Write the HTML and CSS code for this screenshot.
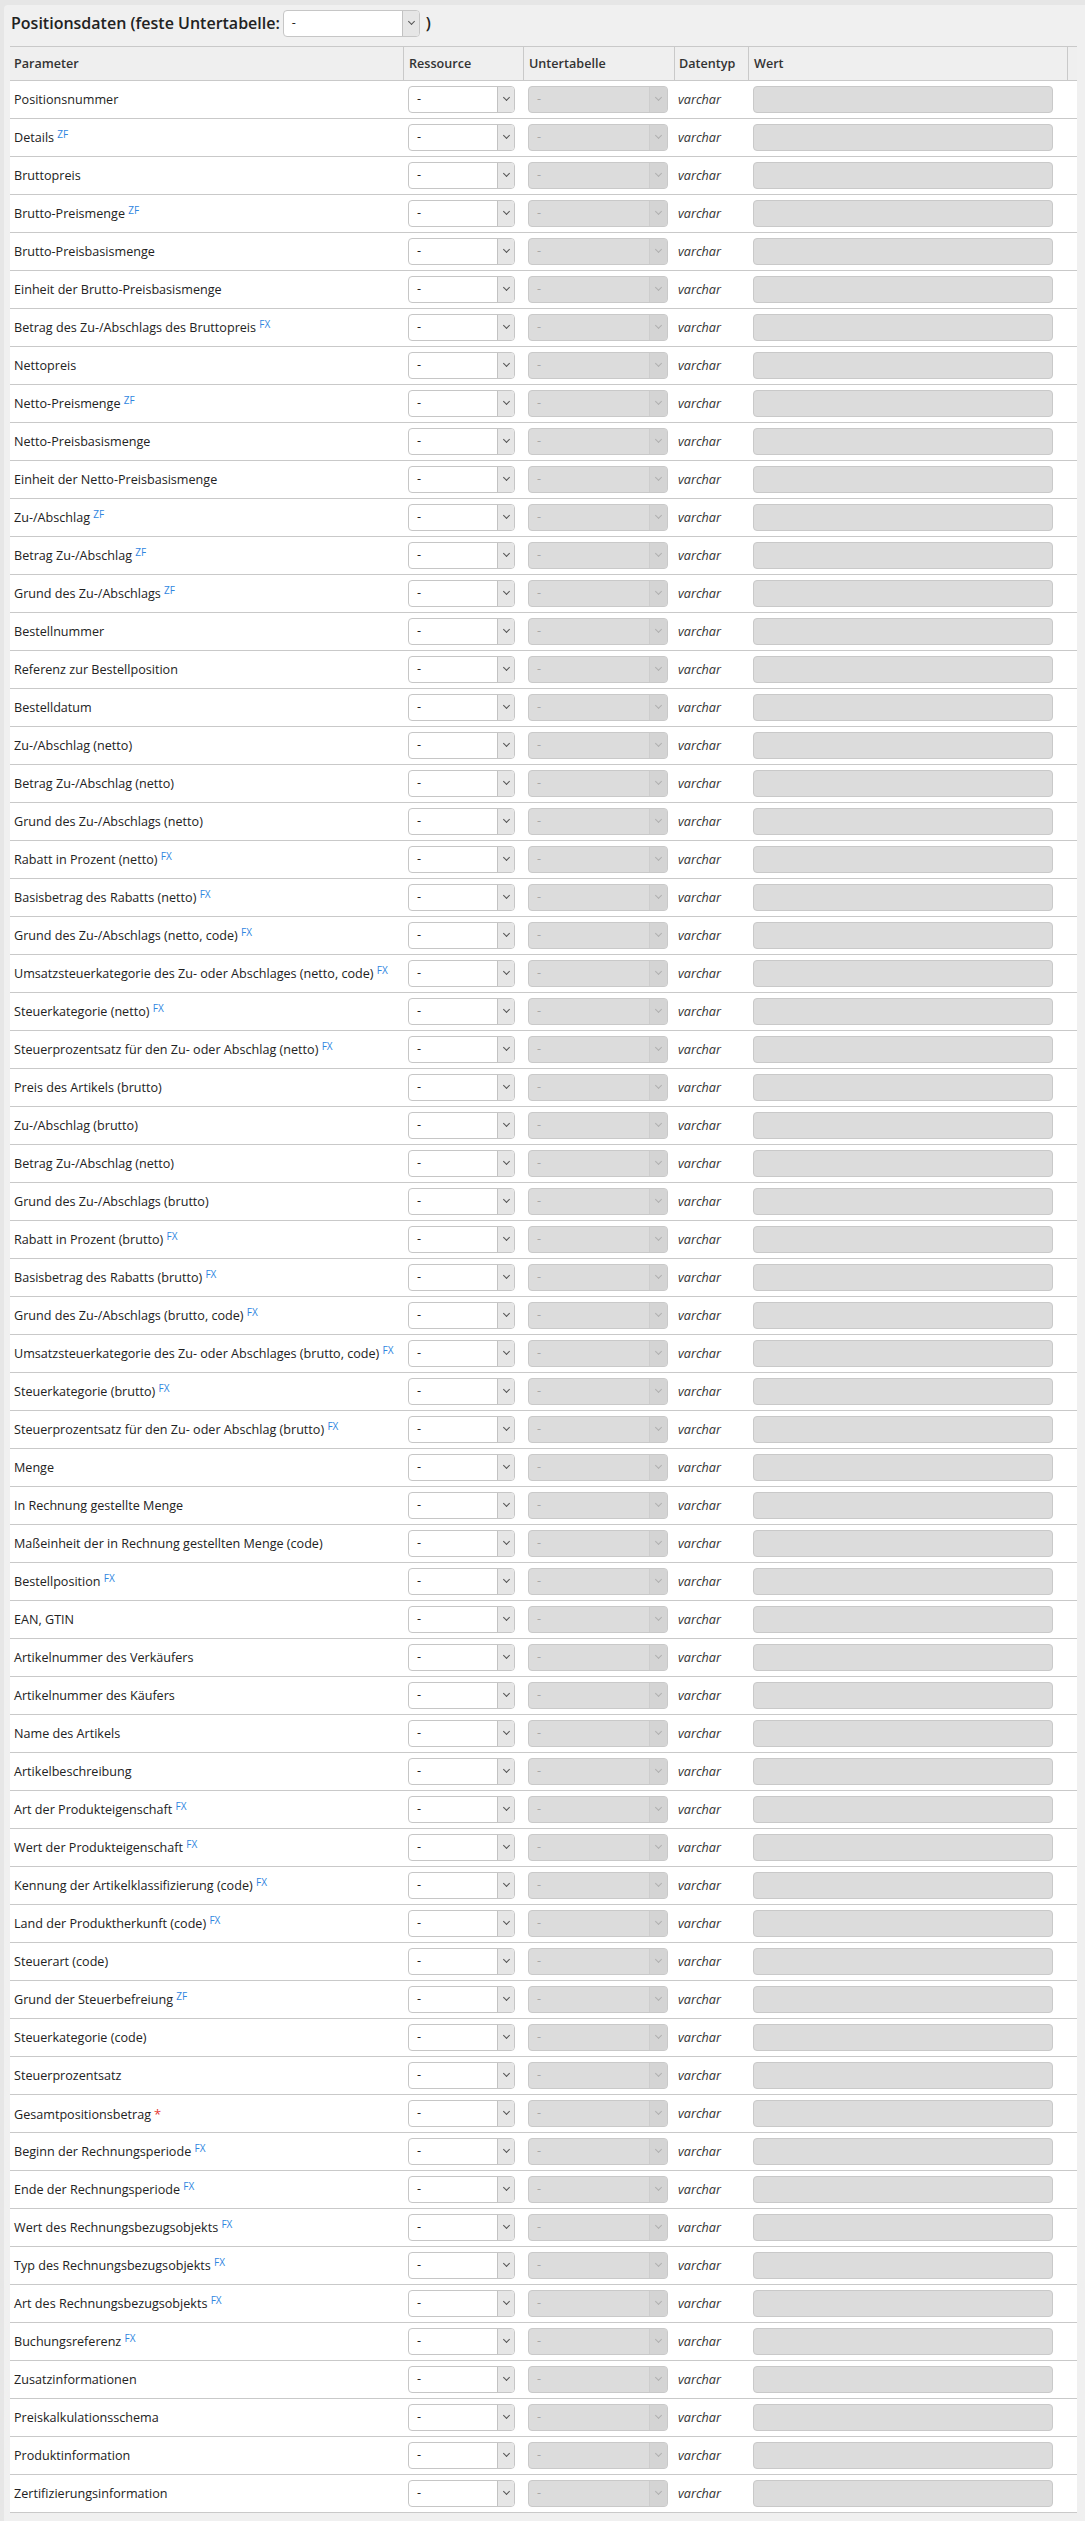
FILE: index.html
```html
<!DOCTYPE html>
<html lang="de">
<head>
<meta charset="utf-8">
<title>Positionsdaten</title>
<link rel="stylesheet" href="styles.css">
</head>
<body>
<div class="panel">
  <h2 class="title"><span>Positionsdaten (feste Untertabelle:</span><div class="sel title-sel"><span>-</span></div><span class="paren">)</span></h2>
  <table class="grid">
    <thead>
      <tr><th class="c1">Parameter</th><th class="c2">Ressource</th><th class="c3">Untertabelle</th><th class="c4">Datentyp</th><th class="c5">Wert</th><th class="c6"></th></tr>
    </thead>
    <tbody>
      <tr><td>Positionsnummer</td><td><div class="sel"><span>-</span></div></td><td><div class="sel dis"><span>-</span></div></td><td class="dt">varchar</td><td><div class="inp"></div></td><td></td></tr>
      <tr><td>Details <sup class="tag">ZF</sup></td><td><div class="sel"><span>-</span></div></td><td><div class="sel dis"><span>-</span></div></td><td class="dt">varchar</td><td><div class="inp"></div></td><td></td></tr>
      <tr><td>Bruttopreis</td><td><div class="sel"><span>-</span></div></td><td><div class="sel dis"><span>-</span></div></td><td class="dt">varchar</td><td><div class="inp"></div></td><td></td></tr>
      <tr><td>Brutto-Preismenge <sup class="tag">ZF</sup></td><td><div class="sel"><span>-</span></div></td><td><div class="sel dis"><span>-</span></div></td><td class="dt">varchar</td><td><div class="inp"></div></td><td></td></tr>
      <tr><td>Brutto-Preisbasismenge</td><td><div class="sel"><span>-</span></div></td><td><div class="sel dis"><span>-</span></div></td><td class="dt">varchar</td><td><div class="inp"></div></td><td></td></tr>
      <tr><td>Einheit der Brutto-Preisbasismenge</td><td><div class="sel"><span>-</span></div></td><td><div class="sel dis"><span>-</span></div></td><td class="dt">varchar</td><td><div class="inp"></div></td><td></td></tr>
      <tr><td>Betrag des Zu-/Abschlags des Bruttopreis <sup class="tag">FX</sup></td><td><div class="sel"><span>-</span></div></td><td><div class="sel dis"><span>-</span></div></td><td class="dt">varchar</td><td><div class="inp"></div></td><td></td></tr>
      <tr><td>Nettopreis</td><td><div class="sel"><span>-</span></div></td><td><div class="sel dis"><span>-</span></div></td><td class="dt">varchar</td><td><div class="inp"></div></td><td></td></tr>
      <tr><td>Netto-Preismenge <sup class="tag">ZF</sup></td><td><div class="sel"><span>-</span></div></td><td><div class="sel dis"><span>-</span></div></td><td class="dt">varchar</td><td><div class="inp"></div></td><td></td></tr>
      <tr><td>Netto-Preisbasismenge</td><td><div class="sel"><span>-</span></div></td><td><div class="sel dis"><span>-</span></div></td><td class="dt">varchar</td><td><div class="inp"></div></td><td></td></tr>
      <tr><td>Einheit der Netto-Preisbasismenge</td><td><div class="sel"><span>-</span></div></td><td><div class="sel dis"><span>-</span></div></td><td class="dt">varchar</td><td><div class="inp"></div></td><td></td></tr>
      <tr><td>Zu-/Abschlag <sup class="tag">ZF</sup></td><td><div class="sel"><span>-</span></div></td><td><div class="sel dis"><span>-</span></div></td><td class="dt">varchar</td><td><div class="inp"></div></td><td></td></tr>
      <tr><td>Betrag Zu-/Abschlag <sup class="tag">ZF</sup></td><td><div class="sel"><span>-</span></div></td><td><div class="sel dis"><span>-</span></div></td><td class="dt">varchar</td><td><div class="inp"></div></td><td></td></tr>
      <tr><td>Grund des Zu-/Abschlags <sup class="tag">ZF</sup></td><td><div class="sel"><span>-</span></div></td><td><div class="sel dis"><span>-</span></div></td><td class="dt">varchar</td><td><div class="inp"></div></td><td></td></tr>
      <tr><td>Bestellnummer</td><td><div class="sel"><span>-</span></div></td><td><div class="sel dis"><span>-</span></div></td><td class="dt">varchar</td><td><div class="inp"></div></td><td></td></tr>
      <tr><td>Referenz zur Bestellposition</td><td><div class="sel"><span>-</span></div></td><td><div class="sel dis"><span>-</span></div></td><td class="dt">varchar</td><td><div class="inp"></div></td><td></td></tr>
      <tr><td>Bestelldatum</td><td><div class="sel"><span>-</span></div></td><td><div class="sel dis"><span>-</span></div></td><td class="dt">varchar</td><td><div class="inp"></div></td><td></td></tr>
      <tr><td>Zu-/Abschlag (netto)</td><td><div class="sel"><span>-</span></div></td><td><div class="sel dis"><span>-</span></div></td><td class="dt">varchar</td><td><div class="inp"></div></td><td></td></tr>
      <tr><td>Betrag Zu-/Abschlag (netto)</td><td><div class="sel"><span>-</span></div></td><td><div class="sel dis"><span>-</span></div></td><td class="dt">varchar</td><td><div class="inp"></div></td><td></td></tr>
      <tr><td>Grund des Zu-/Abschlags (netto)</td><td><div class="sel"><span>-</span></div></td><td><div class="sel dis"><span>-</span></div></td><td class="dt">varchar</td><td><div class="inp"></div></td><td></td></tr>
      <tr><td>Rabatt in Prozent (netto) <sup class="tag">FX</sup></td><td><div class="sel"><span>-</span></div></td><td><div class="sel dis"><span>-</span></div></td><td class="dt">varchar</td><td><div class="inp"></div></td><td></td></tr>
      <tr><td>Basisbetrag des Rabatts (netto) <sup class="tag">FX</sup></td><td><div class="sel"><span>-</span></div></td><td><div class="sel dis"><span>-</span></div></td><td class="dt">varchar</td><td><div class="inp"></div></td><td></td></tr>
      <tr><td>Grund des Zu-/Abschlags (netto, code) <sup class="tag">FX</sup></td><td><div class="sel"><span>-</span></div></td><td><div class="sel dis"><span>-</span></div></td><td class="dt">varchar</td><td><div class="inp"></div></td><td></td></tr>
      <tr><td>Umsatzsteuerkategorie des Zu- oder Abschlages (netto, code) <sup class="tag">FX</sup></td><td><div class="sel"><span>-</span></div></td><td><div class="sel dis"><span>-</span></div></td><td class="dt">varchar</td><td><div class="inp"></div></td><td></td></tr>
      <tr><td>Steuerkategorie (netto) <sup class="tag">FX</sup></td><td><div class="sel"><span>-</span></div></td><td><div class="sel dis"><span>-</span></div></td><td class="dt">varchar</td><td><div class="inp"></div></td><td></td></tr>
      <tr><td>Steuerprozentsatz für den Zu- oder Abschlag (netto) <sup class="tag">FX</sup></td><td><div class="sel"><span>-</span></div></td><td><div class="sel dis"><span>-</span></div></td><td class="dt">varchar</td><td><div class="inp"></div></td><td></td></tr>
      <tr><td>Preis des Artikels (brutto)</td><td><div class="sel"><span>-</span></div></td><td><div class="sel dis"><span>-</span></div></td><td class="dt">varchar</td><td><div class="inp"></div></td><td></td></tr>
      <tr><td>Zu-/Abschlag (brutto)</td><td><div class="sel"><span>-</span></div></td><td><div class="sel dis"><span>-</span></div></td><td class="dt">varchar</td><td><div class="inp"></div></td><td></td></tr>
      <tr><td>Betrag Zu-/Abschlag (netto)</td><td><div class="sel"><span>-</span></div></td><td><div class="sel dis"><span>-</span></div></td><td class="dt">varchar</td><td><div class="inp"></div></td><td></td></tr>
      <tr><td>Grund des Zu-/Abschlags (brutto)</td><td><div class="sel"><span>-</span></div></td><td><div class="sel dis"><span>-</span></div></td><td class="dt">varchar</td><td><div class="inp"></div></td><td></td></tr>
      <tr><td>Rabatt in Prozent (brutto) <sup class="tag">FX</sup></td><td><div class="sel"><span>-</span></div></td><td><div class="sel dis"><span>-</span></div></td><td class="dt">varchar</td><td><div class="inp"></div></td><td></td></tr>
      <tr><td>Basisbetrag des Rabatts (brutto) <sup class="tag">FX</sup></td><td><div class="sel"><span>-</span></div></td><td><div class="sel dis"><span>-</span></div></td><td class="dt">varchar</td><td><div class="inp"></div></td><td></td></tr>
      <tr><td>Grund des Zu-/Abschlags (brutto, code) <sup class="tag">FX</sup></td><td><div class="sel"><span>-</span></div></td><td><div class="sel dis"><span>-</span></div></td><td class="dt">varchar</td><td><div class="inp"></div></td><td></td></tr>
      <tr><td>Umsatzsteuerkategorie des Zu- oder Abschlages (brutto, code) <sup class="tag">FX</sup></td><td><div class="sel"><span>-</span></div></td><td><div class="sel dis"><span>-</span></div></td><td class="dt">varchar</td><td><div class="inp"></div></td><td></td></tr>
      <tr><td>Steuerkategorie (brutto) <sup class="tag">FX</sup></td><td><div class="sel"><span>-</span></div></td><td><div class="sel dis"><span>-</span></div></td><td class="dt">varchar</td><td><div class="inp"></div></td><td></td></tr>
      <tr><td>Steuerprozentsatz für den Zu- oder Abschlag (brutto) <sup class="tag">FX</sup></td><td><div class="sel"><span>-</span></div></td><td><div class="sel dis"><span>-</span></div></td><td class="dt">varchar</td><td><div class="inp"></div></td><td></td></tr>
      <tr><td>Menge</td><td><div class="sel"><span>-</span></div></td><td><div class="sel dis"><span>-</span></div></td><td class="dt">varchar</td><td><div class="inp"></div></td><td></td></tr>
      <tr><td>In Rechnung gestellte Menge</td><td><div class="sel"><span>-</span></div></td><td><div class="sel dis"><span>-</span></div></td><td class="dt">varchar</td><td><div class="inp"></div></td><td></td></tr>
      <tr><td>Maßeinheit der in Rechnung gestellten Menge (code)</td><td><div class="sel"><span>-</span></div></td><td><div class="sel dis"><span>-</span></div></td><td class="dt">varchar</td><td><div class="inp"></div></td><td></td></tr>
      <tr><td>Bestellposition <sup class="tag">FX</sup></td><td><div class="sel"><span>-</span></div></td><td><div class="sel dis"><span>-</span></div></td><td class="dt">varchar</td><td><div class="inp"></div></td><td></td></tr>
      <tr><td>EAN, GTIN</td><td><div class="sel"><span>-</span></div></td><td><div class="sel dis"><span>-</span></div></td><td class="dt">varchar</td><td><div class="inp"></div></td><td></td></tr>
      <tr><td>Artikelnummer des Verkäufers</td><td><div class="sel"><span>-</span></div></td><td><div class="sel dis"><span>-</span></div></td><td class="dt">varchar</td><td><div class="inp"></div></td><td></td></tr>
      <tr><td>Artikelnummer des Käufers</td><td><div class="sel"><span>-</span></div></td><td><div class="sel dis"><span>-</span></div></td><td class="dt">varchar</td><td><div class="inp"></div></td><td></td></tr>
      <tr><td>Name des Artikels</td><td><div class="sel"><span>-</span></div></td><td><div class="sel dis"><span>-</span></div></td><td class="dt">varchar</td><td><div class="inp"></div></td><td></td></tr>
      <tr><td>Artikelbeschreibung</td><td><div class="sel"><span>-</span></div></td><td><div class="sel dis"><span>-</span></div></td><td class="dt">varchar</td><td><div class="inp"></div></td><td></td></tr>
      <tr><td>Art der Produkteigenschaft <sup class="tag">FX</sup></td><td><div class="sel"><span>-</span></div></td><td><div class="sel dis"><span>-</span></div></td><td class="dt">varchar</td><td><div class="inp"></div></td><td></td></tr>
      <tr><td>Wert der Produkteigenschaft <sup class="tag">FX</sup></td><td><div class="sel"><span>-</span></div></td><td><div class="sel dis"><span>-</span></div></td><td class="dt">varchar</td><td><div class="inp"></div></td><td></td></tr>
      <tr><td>Kennung der Artikelklassifizierung (code) <sup class="tag">FX</sup></td><td><div class="sel"><span>-</span></div></td><td><div class="sel dis"><span>-</span></div></td><td class="dt">varchar</td><td><div class="inp"></div></td><td></td></tr>
      <tr><td>Land der Produktherkunft (code) <sup class="tag">FX</sup></td><td><div class="sel"><span>-</span></div></td><td><div class="sel dis"><span>-</span></div></td><td class="dt">varchar</td><td><div class="inp"></div></td><td></td></tr>
      <tr><td>Steuerart (code)</td><td><div class="sel"><span>-</span></div></td><td><div class="sel dis"><span>-</span></div></td><td class="dt">varchar</td><td><div class="inp"></div></td><td></td></tr>
      <tr><td>Grund der Steuerbefreiung <sup class="tag">ZF</sup></td><td><div class="sel"><span>-</span></div></td><td><div class="sel dis"><span>-</span></div></td><td class="dt">varchar</td><td><div class="inp"></div></td><td></td></tr>
      <tr><td>Steuerkategorie (code)</td><td><div class="sel"><span>-</span></div></td><td><div class="sel dis"><span>-</span></div></td><td class="dt">varchar</td><td><div class="inp"></div></td><td></td></tr>
      <tr><td>Steuerprozentsatz</td><td><div class="sel"><span>-</span></div></td><td><div class="sel dis"><span>-</span></div></td><td class="dt">varchar</td><td><div class="inp"></div></td><td></td></tr>
      <tr><td>Gesamtpositionsbetrag<span class="req">*</span></td><td><div class="sel"><span>-</span></div></td><td><div class="sel dis"><span>-</span></div></td><td class="dt">varchar</td><td><div class="inp"></div></td><td></td></tr>
      <tr><td>Beginn der Rechnungsperiode <sup class="tag">FX</sup></td><td><div class="sel"><span>-</span></div></td><td><div class="sel dis"><span>-</span></div></td><td class="dt">varchar</td><td><div class="inp"></div></td><td></td></tr>
      <tr><td>Ende der Rechnungsperiode <sup class="tag">FX</sup></td><td><div class="sel"><span>-</span></div></td><td><div class="sel dis"><span>-</span></div></td><td class="dt">varchar</td><td><div class="inp"></div></td><td></td></tr>
      <tr><td>Wert des Rechnungsbezugsobjekts <sup class="tag">FX</sup></td><td><div class="sel"><span>-</span></div></td><td><div class="sel dis"><span>-</span></div></td><td class="dt">varchar</td><td><div class="inp"></div></td><td></td></tr>
      <tr><td>Typ des Rechnungsbezugsobjekts <sup class="tag">FX</sup></td><td><div class="sel"><span>-</span></div></td><td><div class="sel dis"><span>-</span></div></td><td class="dt">varchar</td><td><div class="inp"></div></td><td></td></tr>
      <tr><td>Art des Rechnungsbezugsobjekts <sup class="tag">FX</sup></td><td><div class="sel"><span>-</span></div></td><td><div class="sel dis"><span>-</span></div></td><td class="dt">varchar</td><td><div class="inp"></div></td><td></td></tr>
      <tr><td>Buchungsreferenz <sup class="tag">FX</sup></td><td><div class="sel"><span>-</span></div></td><td><div class="sel dis"><span>-</span></div></td><td class="dt">varchar</td><td><div class="inp"></div></td><td></td></tr>
      <tr><td>Zusatzinformationen</td><td><div class="sel"><span>-</span></div></td><td><div class="sel dis"><span>-</span></div></td><td class="dt">varchar</td><td><div class="inp"></div></td><td></td></tr>
      <tr><td>Preiskalkulationsschema</td><td><div class="sel"><span>-</span></div></td><td><div class="sel dis"><span>-</span></div></td><td class="dt">varchar</td><td><div class="inp"></div></td><td></td></tr>
      <tr><td>Produktinformation</td><td><div class="sel"><span>-</span></div></td><td><div class="sel dis"><span>-</span></div></td><td class="dt">varchar</td><td><div class="inp"></div></td><td></td></tr>
      <tr><td>Zertifizierungsinformation</td><td><div class="sel"><span>-</span></div></td><td><div class="sel dis"><span>-</span></div></td><td class="dt">varchar</td><td><div class="inp"></div></td><td></td></tr>
    </tbody>
  </table>
</div>
</body>
</html>
```
FILE: styles.css
```css
html, body {
  margin: 0;
  padding: 0;
  background: #e6e6e6;
}
body {
  font-family: "Open Sans", "Liberation Sans", sans-serif;
  font-size: 12.6px;
  color: #222;
}
.panel {
  margin: 5px 0 0 4px;
  padding: 0 8px 20px 6px;
  background: #f0f0f0;
  border-radius: 4px 0 0 0;
}
.title {
  display: flex;
  align-items: center;
  margin: 0;
  padding: 5px 0 9px 1px;
  font-size: 16px;
  font-weight: 600;
  color: #222;
  line-height: 27px;
}
.title .title-sel {
  width: 137px;
  margin-left: 3px;
  font-weight: 400;
  font-size: 12.6px;
}
.title .paren {
  margin-left: 6px;
}
.grid {
  width: 1067px;
  table-layout: fixed;
  border-collapse: separate;
  border-spacing: 0;
  border-top: 1px solid #c9c9c9;
}
.grid th {
  box-sizing: border-box;
  height: 34px;
  padding: 0 0 0 5px;
  text-align: left;
  font-weight: 600;
  color: #333;
  background: #efefef;
  border-bottom: 1px solid #c9c9c9;
  border-left: 1px solid #c9c9c9;
  white-space: nowrap;
}
.grid th.c1 { width: 393px; border-left: 0; padding-left: 4px; }
.grid th.c2 { width: 120px; }
.grid th.c3 { width: 151px; }
.grid th.c4 { width: 74px; padding-left: 4px; }
.grid th.c5 { width: 319px; }
.grid th.c6 { width: 10px; padding: 0; }
.grid td {
  box-sizing: border-box;
  height: 38px;
  padding: 0 0 0 5px;
  background: #fff;
  border-bottom: 1px solid #c9c9c9;
  vertical-align: middle;
  white-space: nowrap;
}
.grid td:first-child { padding-left: 4px; }
.grid td.dt {
  padding-left: 4px;
  font-style: italic;
  color: #333;
}
.grid td:last-child { padding: 0; }
.sel {
  position: relative;
  box-sizing: border-box;
  display: flex;
  align-items: center;
  width: 107px;
  height: 27px;
  padding-left: 8px;
  background: #fff;
  border: 1px solid #c6c6c6;
  border-radius: 4px;
  color: #222;
  line-height: 1;
}
.sel::before {
  content: "";
  position: absolute;
  top: 0;
  right: 0;
  bottom: 0;
  width: 16px;
  background: #e6e6e6;
  border-left: 1px solid #c2c2c2;
  border-radius: 0 3px 3px 0;
}
.sel::after {
  content: "";
  position: absolute;
  top: 8px;
  right: 5px;
  width: 4px;
  height: 4px;
  border-right: 1px solid #555;
  border-bottom: 1px solid #555;
  transform: rotate(45deg);
}
.sel.dis {
  width: 140px;
  background: #dcdcdc;
  border-color: #c9c9c9;
  color: #a8a8a8;
}
.sel.dis::before {
  width: 17px;
  background: #d4d4d4;
  border-left-color: #cdcdcd;
}
.sel.dis::after {
  right: 6px;
  border-color: #b0b0b0;
}
.inp {
  box-sizing: border-box;
  width: 300px;
  height: 27px;
  background: #dcdcdc;
  border: 1px solid #c9c9c9;
  border-radius: 4px;
}
.tag {
  font-size: 10px;
  line-height: 0;
  vertical-align: 4px;
  color: #2f86df;
}
.req {
  margin-left: 3px;
  color: #e53935;
  font-size: 13px;
}
```
